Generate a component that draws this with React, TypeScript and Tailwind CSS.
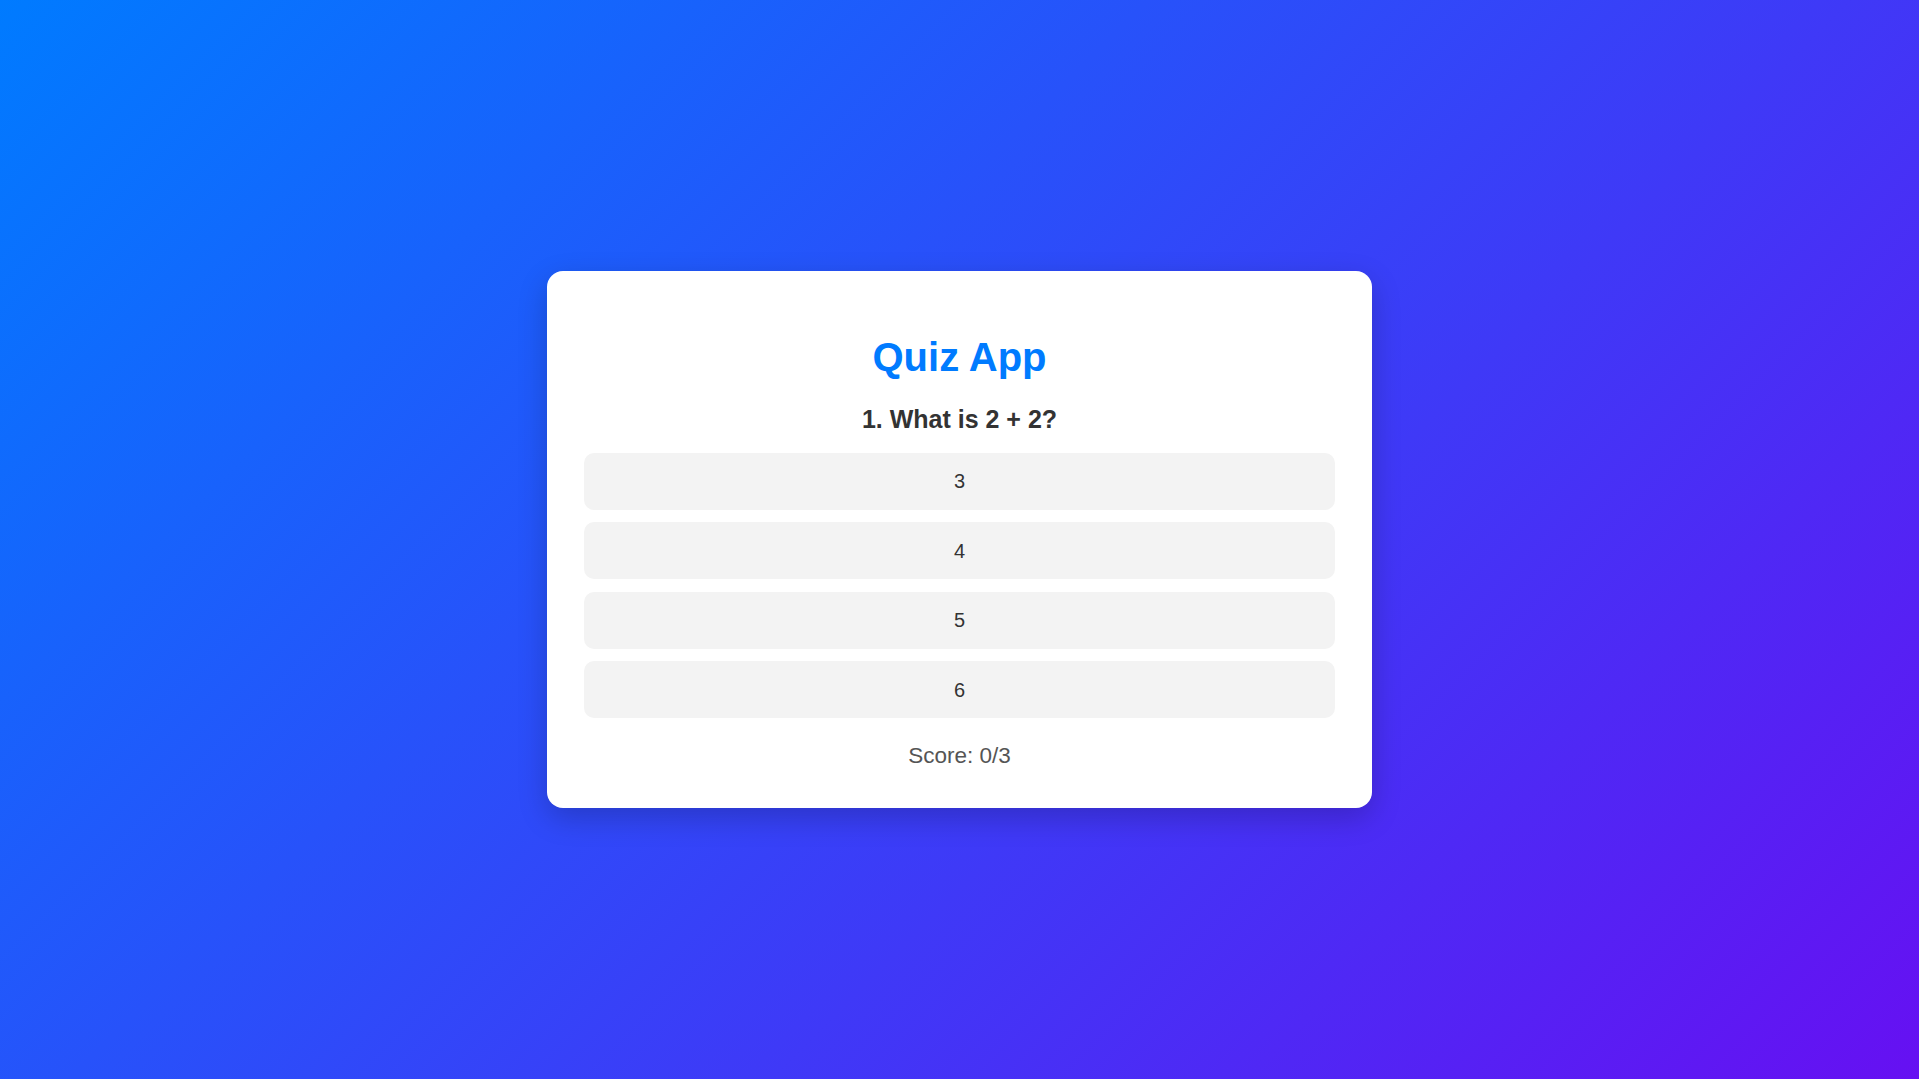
const questions = [
  { question: "What is 2 + 2?", options: ["3", "4", "5", "6"] },
];

const App = () => {
  const current = 0;
  const score = 0;
  const total = 3;
  const q = questions[current];

  return (
    <div className="min-h-screen w-full flex items-center justify-center bg-[linear-gradient(135deg,#007bff,#6610f2)] font-['Liberation_Sans',Arial,sans-serif]">
      {/* Quiz Card */}
      <div className="w-[825px] bg-white rounded-2xl shadow-[0_10px_30px_rgba(0,0,0,0.2)] px-[37px] pt-[64px] pb-[39px] flex flex-col items-center text-[#333]">
        <h1 className="text-[40px] leading-[44px] font-bold text-[#007bff]">
          Quiz App
        </h1>
        <h2 className="mt-[26px] text-[25px] leading-[28px] font-bold text-[#333]">
          {current + 1}. {q.question}
        </h2>

        {/* Options */}
        <div className="mt-[20px] w-full flex flex-col gap-[12.5px]">
          {q.options.map((opt) => (
            <button
              key={opt}
              className="w-full h-[57px] rounded-[10px] bg-[#f3f3f3] text-[20px] text-[#333] flex items-center justify-center"
            >
              {opt}
            </button>
          ))}
        </div>

        <p className="mt-[25px] text-[22.5px] leading-[26px] text-[#555]">
          Score: {score}/{total}
        </p>
      </div>
    </div>
  );
};

export default App;
